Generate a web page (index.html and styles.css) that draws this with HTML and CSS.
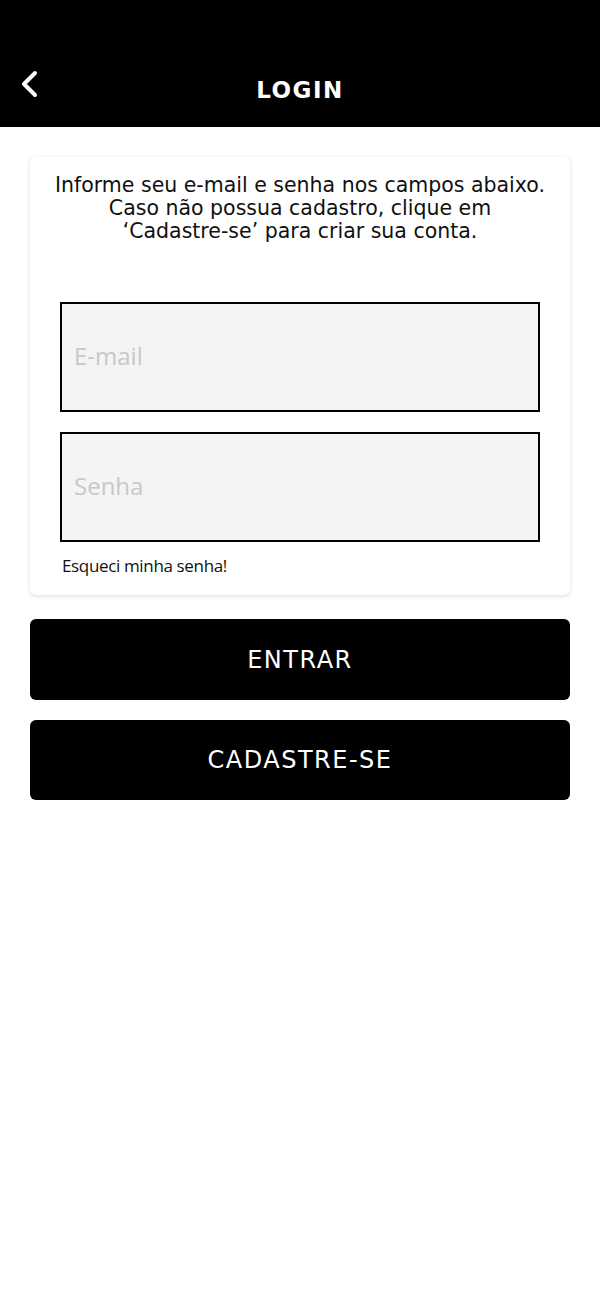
FILE: index.html
```html
<!DOCTYPE html>
<html>
<head>
    <title>Login</title>
    <link rel="stylesheet" href="styles.css">
</head>
<body>
    <div class="topo">
        <button class="voltar" aria-label="Voltar">
            <svg width="22" height="30" viewBox="0 0 22 30">
                <path d="M17 4 L6 15 L17 26" fill="none" stroke="white" stroke-width="4" stroke-linecap="round" stroke-linejoin="round"/>
            </svg>
        </button>
        <h1>LOGIN</h1>
    </div>
    <div class="conteudo">
        <div class="cartao">
            <p class="instrucao">Informe seu e-mail e senha nos campos abaixo.<br>Caso não possua cadastro, clique em<br>‘Cadastre-se’ para criar sua conta.</p>
            <input type="text" class="campo" placeholder="E-mail" />
            <input type="password" class="campo" placeholder="Senha" />
            <a class="esqueci" href="#">Esqueci minha senha!</a>
        </div>
        <button class="botao">ENTRAR</button>
        <button class="botao">CADASTRE-SE</button>
    </div>
</body>
</html>
```

FILE: styles.css
```css
/* Estilo geral */
body {
    margin: 0;
    font-family: "DejaVu Sans", sans-serif;
    background-color: white;
}
.topo {
    background-color: black;
    height: 127px;
    position: relative;
    display: flex;
    align-items: flex-end;
    justify-content: center;
}
.topo h1 {
    color: white;
    font-family: "DejaVu Sans", sans-serif;
    font-weight: bold;
    font-size: 23px;
    letter-spacing: 1.5px;
    margin: 0 0 21px 0;
    line-height: 32px;
}
.voltar {
    position: absolute;
    left: 18px;
    bottom: 25px;
    background: none;
    border: none;
    padding: 0;
    cursor: pointer;
}
.conteudo {
    padding: 30px 30px;
    display: flex;
    flex-direction: column;
}
.cartao {
    background-color: white;
    border-radius: 6px;
    box-shadow: 0 1px 4px rgba(0, 0, 0, 0.15);
    padding: 17px 20px 18px 30px;
    display: flex;
    flex-direction: column;
}
.instrucao {
    text-align: center;
    font-size: 20.5px;
    line-height: 23px;
    color: #111;
    margin: 0 -10px 59px -20px;
}
.campo {
    height: 110px;
    width: 480px;
    border: 2px solid black;
    background-color: #f4f4f4;
    box-sizing: border-box;
    padding: 0 12px 4px 12px;
    font-family: "Open Sans", sans-serif;
    font-size: 24px;
    margin: 0 0 20px 0;
    outline: none;
}
.campo::placeholder {
    color: #c8c8c8;
}
.campo + .campo {
    margin-bottom: 12px;
}
.esqueci {
    font-family: "Open Sans", sans-serif;
    font-size: 17px;
    color: #111;
    text-decoration: none;
    margin-left: 2px;
    letter-spacing: -0.35px;
}
.botao {
    background-color: black;
    color: white;
    border: none;
    border-radius: 6px;
    height: 81px;
    font-family: "DejaVu Sans", sans-serif;
    font-size: 24px;
    letter-spacing: 1.5px;
    margin-top: 24px;
    cursor: pointer;
}
.botao + .botao {
    margin-top: 20px;
    height: 80px;
}
```
